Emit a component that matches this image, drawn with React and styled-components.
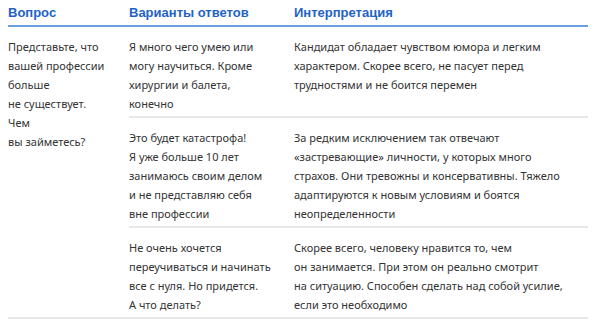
import React from 'react';
import styled, { createGlobalStyle } from 'styled-components'

const GlobalStyle = createGlobalStyle`
body{
    margin:0;
    background:#fff;
    font-family:"Noto Sans", "Open Sans", sans-serif;
}
`
const Wrapper = styled.div`
padding:0 8px;
`
const Table = styled.table`
width:580px;
border-collapse:collapse;
table-layout:fixed;
`
const HeadCell = styled.th`
text-align:left;
font-family:"Liberation Sans", Arial, sans-serif;
font-size:13px;
font-weight:700;
line-height:20px;
color:#1f63c6;
padding:3px 0 2px 0;
border-bottom:2px solid #6a9fe0;
width:${p => p.$w}px;
`
const Cell = styled.td`
vertical-align:top;
font-size:11px;
line-height:19px;
color:#333;
padding:10px 0 3px 0;
white-space:nowrap;
border-bottom:2px solid #e8e8e8;
`

const rows = [
    {
        answer: ['Я много чего умею или', 'могу научиться. Кроме', 'хирургии и балета,', 'конечно'],
        meaning: ['Кандидат обладает чувством юмора и легким', 'характером. Скорее всего, не пасует перед', 'трудностями и не боится перемен']
    },
    {
        answer: ['Это будет катастрофа!', 'Я уже больше 10 лет', 'занимаюсь своим делом', 'и не представляю себя', 'вне профессии'],
        meaning: ['За редким исключением так отвечают', '«застревающие» личности, у которых много', 'страхов. Они тревожны и консервативны. Тяжело', 'адаптируются к новым условиям и боятся', 'неопределенности']
    },
    {
        answer: ['Не очень хочется', 'переучиваться и начинать', 'все с нуля. Но придется.', 'А что делать?'],
        meaning: ['Скорее всего, человеку нравится то, чем', 'он занимается. При этом он реально смотрит', 'на ситуацию. Способен сделать над собой усилие,', 'если это необходимо']
    }
]

const question = ['Представьте, что', 'вашей профессии', 'больше', 'не существует.', 'Чем', 'вы займетесь?']

const Lines = ({ items }) => items.map((t, i) => (
    <React.Fragment key={i}>{t}{i < items.length - 1 && <br />}</React.Fragment>
))

export default function App() {
    return (
        <Wrapper>
            <GlobalStyle />
            <Table>
                <thead>
                    <tr>
                        <HeadCell $w={121}>Вопрос</HeadCell>
                        <HeadCell $w={165}>Варианты ответов</HeadCell>
                        <HeadCell $w={294}>Интерпретация</HeadCell>
                    </tr>
                </thead>
                <tbody>
                    {rows.map((r, i) => (
                        <tr key={i}>
                            {i === 0 && (
                                <Cell rowSpan={3}>
                                    <Lines items={question} />
                                </Cell>
                            )}
                            <Cell><Lines items={r.answer} /></Cell>
                            <Cell><Lines items={r.meaning} /></Cell>
                        </tr>
                    ))}
                </tbody>
            </Table>
        </Wrapper>
    );
}
